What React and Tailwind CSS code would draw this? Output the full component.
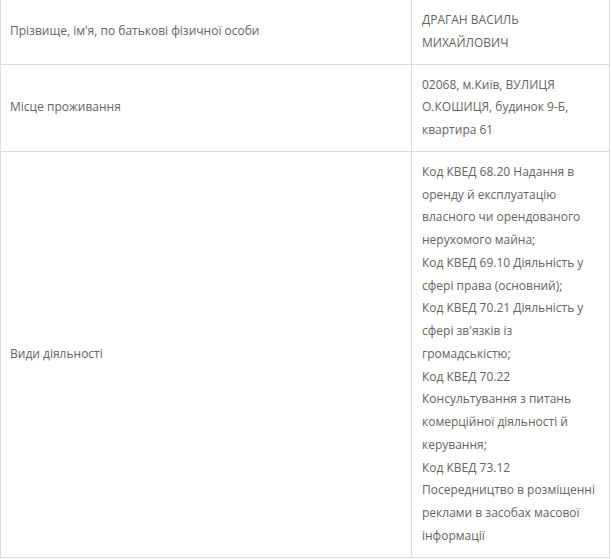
import React from "react";

const rows = [
  {
    label: "Прізвище, ім'я, по батькові фізичної особи",
    lines: ["ДРАГАН ВАСИЛЬ", "МИХАЙЛОВИЧ"],
  },
  {
    label: "Місце проживання",
    lines: ["02068, м.Київ, ВУЛИЦЯ", "О.КОШИЦЯ, будинок 9-Б,", "квартира 61"],
  },
  {
    label: "Види діяльності",
    lines: [
      "Код КВЕД 68.20 Надання в",
      "оренду й експлуатацію",
      "власного чи орендованого",
      "нерухомого майна;",
      "Код КВЕД 69.10 Діяльність у",
      "сфері права (основний);",
      "Код КВЕД 70.21 Діяльність у",
      "сфері зв'язків із",
      "громадськістю;",
      "Код КВЕД 70.22",
      "Консультування з питань",
      "комерційної діяльності й",
      "керування;",
      "Код КВЕД 73.12",
      "Посередництво в розміщенні",
      "реклами в засобах масової",
      "інформації",
    ],
  },
];

export default function App() {
  return (
    <div className="bg-white w-[611px] h-[559px] overflow-hidden font-['Open_Sans',sans-serif] text-[12px] leading-[22.75px] text-[#646464]">
      <div className="w-[610px] border-l border-r border-[#dcdcdc]">
        {rows.map((row, i) => (
          <div key={i} className="flex border-b border-[#dcdcdc]">
            <div className="w-[411px] shrink-0 flex items-center px-[9px] py-[9px] border-r border-[#dcdcdc]">
              {row.label}
            </div>
            <div className="flex-1 min-w-0 px-[10px] py-[9px] whitespace-nowrap">
              {row.lines.map((l, j) => (
                <div key={j}>{l}</div>
              ))}
            </div>
          </div>
        ))}
      </div>
    </div>
  );
}
